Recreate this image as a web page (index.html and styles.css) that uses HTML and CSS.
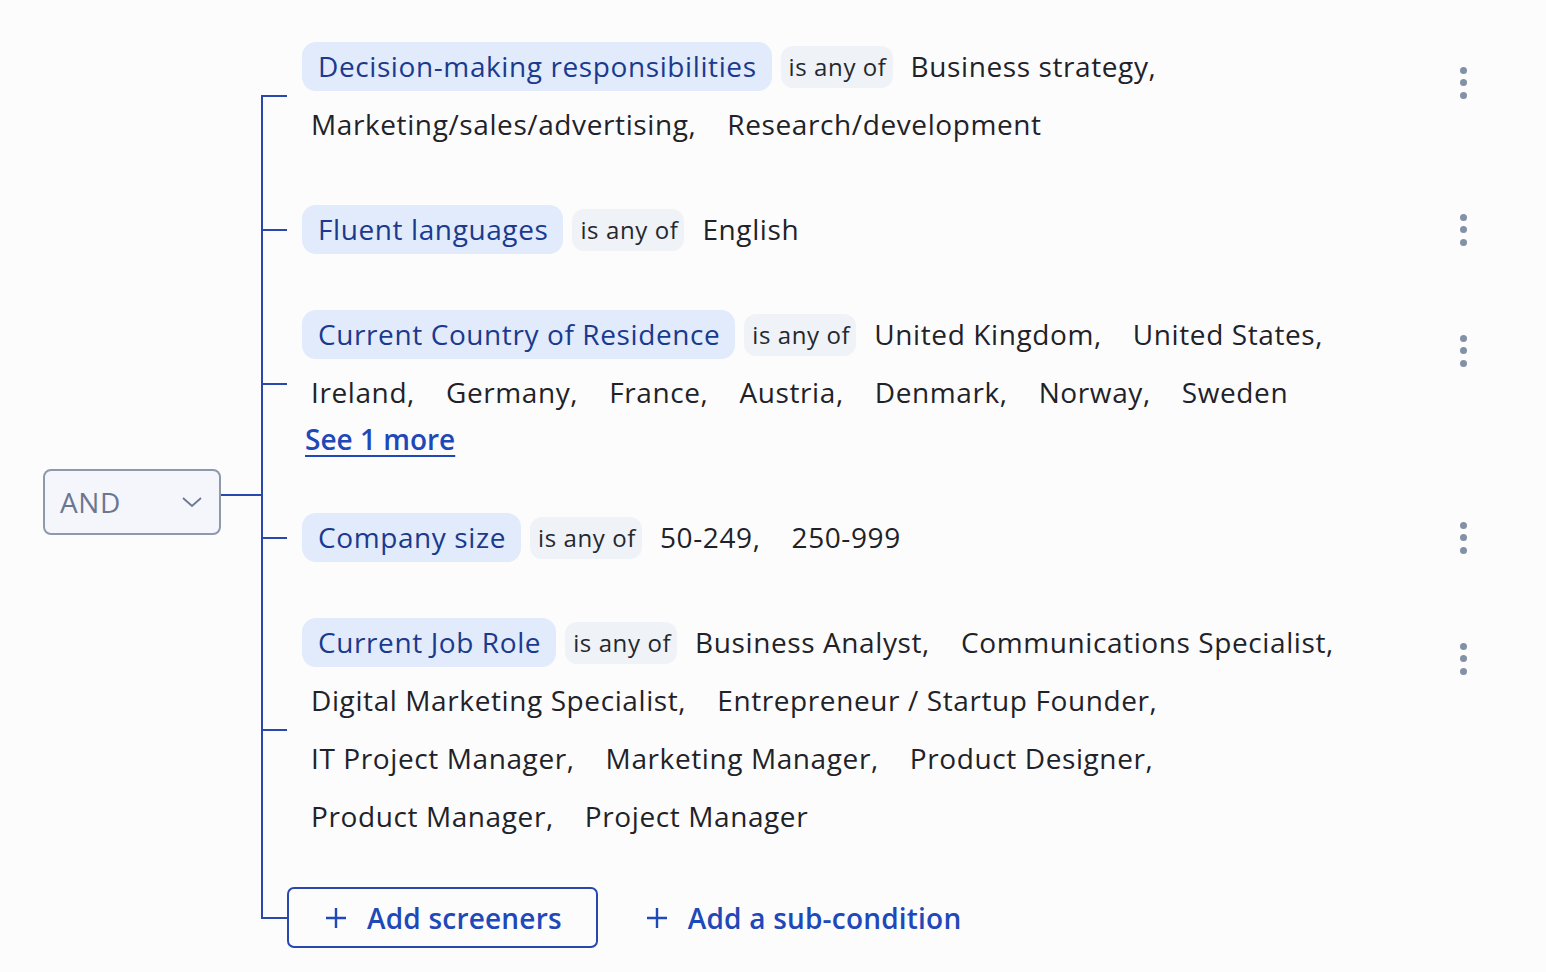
FILE: index.html
```html
<!DOCTYPE html>
<html lang="en">
<head>
  <meta charset="UTF-8">
  <meta name="viewport" content="width=device-width, initial-scale=1.0">
  <title>Screeners</title>
  <link rel="stylesheet" href="styles.css">
</head>
<body>
  <div class="screener">
    <!-- Logic operator for the whole group -->
    <button class="logic-select" type="button">
      <span>AND</span>
      <svg width="20" height="10" viewBox="0 0 20 10"><path d="M1 1l9 8 9-8" fill="none" stroke="currentColor" stroke-width="1.8"/></svg>
    </button>

    <div class="tree">
      <div class="branch">
        <div class="criterion criterion--wrap">
          <div class="criterion-body">
            <div class="values">
              <span class="attr">Decision-making responsibilities</span>
              <span class="op">is any of</span>
              <span class="val">Business strategy,</span>
              <span class="val">Marketing/sales/advertising,</span>
              <span class="val">Research/development</span>
            </div>
          </div>
          <button class="kebab" type="button"><i></i><i></i><i></i></button>
        </div>
      </div>

      <div class="branch">
        <div class="criterion">
          <div class="criterion-body">
            <div class="values">
              <span class="attr">Fluent languages</span>
              <span class="op">is any of</span>
              <span class="val">English</span>
            </div>
          </div>
          <button class="kebab" type="button"><i></i><i></i><i></i></button>
        </div>
      </div>

      <div class="branch">
        <div class="criterion criterion--wrap">
          <div class="criterion-body">
            <div class="values">
              <span class="attr">Current Country of Residence</span>
              <span class="op">is any of</span>
              <span class="val">United Kingdom,</span>
              <span class="val">United States,</span>
              <span class="val">Ireland,</span>
              <span class="val">Germany,</span>
              <span class="val">France,</span>
              <span class="val">Austria,</span>
              <span class="val">Denmark,</span>
              <span class="val">Norway,</span>
              <span class="val">Sweden</span>
            </div>
            <a class="see-more" href="#">See 1 more</a>
          </div>
          <button class="kebab" type="button"><i></i><i></i><i></i></button>
        </div>
      </div>

      <div class="branch">
        <div class="criterion">
          <div class="criterion-body">
            <div class="values">
              <span class="attr">Company size</span>
              <span class="op">is any of</span>
              <span class="val">50-249,</span>
              <span class="val">250-999</span>
            </div>
          </div>
          <button class="kebab" type="button"><i></i><i></i><i></i></button>
        </div>
      </div>

      <div class="branch">
        <div class="criterion criterion--wrap">
          <div class="criterion-body">
            <div class="values">
              <span class="attr">Current Job Role</span>
              <span class="op">is any of</span>
              <span class="val">Business Analyst,</span>
              <span class="val">Communications Specialist,</span>
              <span class="val">Digital Marketing Specialist,</span>
              <span class="val">Entrepreneur / Startup Founder,</span>
              <span class="val">IT Project Manager,</span>
              <span class="val">Marketing Manager,</span>
              <span class="val">Product Designer,</span>
              <span class="val">Product Manager,</span>
              <span class="val">Project Manager</span>
            </div>
          </div>
          <button class="kebab" type="button"><i></i><i></i><i></i></button>
        </div>
      </div>

      <div class="branch branch--actions">
        <button class="btn btn-outline" type="button">
          <svg width="22" height="22" viewBox="0 0 22 22"><path d="M11 1v20M1 11h20" stroke="currentColor" stroke-width="2.4"/></svg>
          Add screeners
        </button>
        <button class="btn btn-text" type="button">
          <svg width="22" height="22" viewBox="0 0 22 22"><path d="M11 1v20M1 11h20" stroke="currentColor" stroke-width="2.4"/></svg>
          Add a sub-condition
        </button>
      </div>
    </div>
  </div>
</body>
</html>
```

FILE: styles.css
```css
body {
  font-family: 'Open Sans', 'Noto Sans', sans-serif;
  letter-spacing: 0.6px;
  background: #fcfcfd;
  margin: 0;
  color: #1f2329;
}
button {
  font-family: inherit;
  letter-spacing: inherit;
}
.screener {
  display: flex;
  align-items: center;
  padding: 42px 0 0 43px;
}
.logic-select {
  display: flex;
  align-items: center;
  justify-content: space-between;
  box-sizing: border-box;
  width: 178px;
  height: 66px;
  margin-top: 14px;
  padding: 0 17px 0 15px;
  border: 2px solid #8e99ad;
  border-radius: 8px;
  background: #f4f6fb;
  color: #6b7790;
  font-size: 28px;
  cursor: pointer;
}

/* tree lines */
.tree {
  position: relative;
  flex: 1;
  display: flex;
  flex-direction: column;
  gap: 56px;
  padding-left: 40px;
}
.tree::before {
  content: '';
  position: absolute;
  left: 0;
  top: 50%;
  width: 40px;
  height: 2px;
  margin-top: -1px;
  background: #2848ad;
}
.branch {
  position: relative;
  padding-left: 26px;
}
.branch::before {
  content: '';
  position: absolute;
  left: 0;
  top: 0;
  bottom: -56px;
  width: 2px;
  background: #2848ad;
}
.branch:first-child::before {
  top: 50%;
}
.branch:last-child::before {
  bottom: 50%;
}
.branch::after {
  content: '';
  position: absolute;
  left: 0;
  top: 50%;
  width: 26px;
  height: 2px;
  margin-top: -1px;
  background: #2848ad;
}

/* criterion rows */
.criterion {
  display: flex;
  align-items: flex-start;
  gap: 60px;
  padding-left: 15px;
  padding-right: 59px;
}
.criterion-body {
  flex: 1;
  display: flex;
  flex-direction: column;
}
.values {
  display: flex;
  flex-wrap: wrap;
  align-items: center;
  gap: 9px;
}
.attr {
  height: 49px;
  line-height: 49px;
  padding: 0 15px 0 16px;
  border-radius: 14px;
  background: #e1ebfc;
  color: #1b3a8e;
  font-size: 28px;
}
.op {
  height: 42px;
  line-height: 42px;
  padding: 0 6px 0 8px;
  border-radius: 12px;
  background: #eff2f6;
  color: #24282e;
  font-size: 24px;
}
.val {
  height: 49px;
  line-height: 49px;
  padding: 0 13px 0 9px;
  font-size: 28px;
}
.val:last-child {
  padding-right: 0;
}
.see-more {
  align-self: flex-start;
  margin-top: 4px;
  margin-left: 3px;
  line-height: 36px;
  font-size: 28px;
  font-weight: 600;
  letter-spacing: 0;
  color: #1f48b8;
  text-decoration: underline;
  text-underline-offset: 5px;
}
.kebab {
  display: flex;
  flex-direction: column;
  align-items: center;
  justify-content: center;
  gap: 5.5px;
  width: 48px;
  height: 49px;
  padding: 0;
  border: none;
  background: none;
  cursor: pointer;
}
.criterion--wrap .kebab {
  margin-top: 16px;
}
.kebab i {
  display: block;
  width: 7px;
  height: 7px;
  border-radius: 50%;
  background: #8391a7;
}

/* bottom actions */
.branch--actions {
  display: flex;
  align-items: center;
  gap: 10px;
  margin-top: -10px;
}
.btn {
  display: flex;
  align-items: center;
  gap: 20px;
  box-sizing: border-box;
  height: 61px;
  padding: 0 34px 0 36px;
  border: 2px solid transparent;
  border-radius: 7px;
  background: none;
  color: #1f48b8;
  font-size: 28px;
  font-weight: 600;
  letter-spacing: 0.2px;
  cursor: pointer;
}
.btn-outline {
  border-color: #2848ad;
}
```
